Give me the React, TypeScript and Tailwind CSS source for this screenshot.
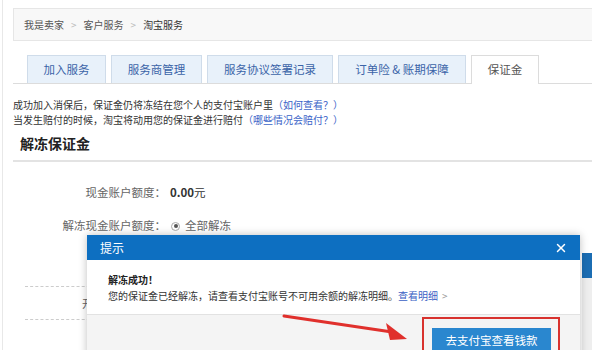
import { X } from "lucide-react";

const tabs = [
  { label: "加入服务", w: "w-[79px]" },
  { label: "服务商管理", w: "w-[91px]" },
  { label: "服务协议签署记录", w: "w-[126px]" },
  { label: "订单险 & 账期保障", w: "w-[128px]" },
];

export default function App() {
  return (
    <div className="relative h-[350px] w-[592px] overflow-hidden bg-white pl-[2px] font-['Noto_Sans_CJK_SC',sans-serif]">
      <div className="h-full border-l border-[#e8e8e8] pl-[10px] pt-[8px]">
        {/* breadcrumb */}
        <div className="mr-[-20px] flex h-[33px] items-center gap-[7px] border border-[#e6e6e6] bg-[#f8f8f8] pl-[10px] text-[10px] text-[#555]">
          <span>我是卖家</span>
          <span className="text-[#bbb]">&gt;</span>
          <span>客户服务</span>
          <span className="text-[#bbb]">&gt;</span>
          <span className="text-[#333]">淘宝服务</span>
        </div>

        {/* tabs */}
        <div className="mt-[14px] mr-[-20px] flex h-[29px] items-end gap-[5px] border-b border-[#dcdcdc] pl-[14px]">
          {tabs.map((t) => (
            <div
              key={t.label}
              className={`${t.w} flex h-[28px] items-center justify-center border border-b-0 border-[#cfdcea] bg-[#e8f1fa] text-[11.5px] text-[#3b64a8]`}
            >
              {t.label}
            </div>
          ))}
          <div className="-mb-px flex h-[29px] w-[68px] items-center justify-center border border-b-0 border-[#dcdcdc] bg-white text-[11.5px] text-[#555]">
            保证金
          </div>
        </div>

        {/* notes */}
        <div className="mt-[13px] text-[10px] leading-[15px] text-[#333]">
          <p>
            成功加入消保后，保证金仍将冻结在您个人的支付宝账户里
            <span className="text-[#3b64c8]">（如何查看？）</span>
          </p>
          <p>
            当发生赔付的时候，淘宝将动用您的保证金进行赔付
            <span className="text-[#3b64c8]">（哪些情况会赔付？）</span>
          </p>
        </div>

        <h2 className="mt-[6px] pl-[7px] text-[14px] leading-[20px] font-bold text-[#222]">解冻保证金</h2>
        <div className="mt-[7px] mr-[-20px] h-[2px] bg-[#e3e3e3]" />

        {/* form */}
        <div className="mt-[21px] flex h-[20px] items-center text-[11.5px] text-[#666]">
          <span className="w-[153px] text-right">现金账户额度：</span>
          <span className="ml-[4px] font-bold text-[#333]">0.00<span className="font-normal">元</span></span>
        </div>
        <div className="mt-[13px] flex h-[20px] items-center text-[11.5px] text-[#666]">
          <span className="w-[153px] text-right">解冻现金账户额度：</span>
          <span className="ml-[5px] flex h-[9px] w-[9px] items-center justify-center rounded-full border border-[#aaa]">
            <span className="h-[4px] w-[4px] rounded-full bg-[#555]" />
          </span>
          <span className="ml-[5px]">全部解冻</span>
        </div>

        <div className="mt-[50px] ml-[12px] w-[70px] border-t border-dashed border-[#ccc]" />
        <div className="mt-[9px] flex h-[14px] items-center pl-[69px] text-[11px] text-[#666]">开</div>
        <div className="mt-[9px] ml-[12px] w-[70px] border-t border-dashed border-[#ccc]" />
      </div>

      {/* element peeking out behind the dialog */}
      <div className="absolute top-[253px] left-[582px] h-[25px] w-[12px] bg-[#1b6db3]" />
      <div className="absolute top-[278px] left-[582px] h-[80px] w-[12px] bg-[#eeeeee]" />

      {/* dialog */}
      <div className="absolute top-[235px] left-[87px] w-[493px] bg-white shadow-[0_0_8px_rgba(0,0,0,0.25)]">
        <div className="flex h-[25px] items-center justify-between bg-[#0d6fc1] pr-[12px] pl-[13px] text-[12px] text-white">
          <span>提示</span>
          <X size={14} strokeWidth={2.5} />
        </div>
        <div className="h-[55px] border-b border-[#e2e2e2] pt-[12px] pl-[21px] text-[10px] leading-[16px] text-[#333]">
          <p className="font-bold text-[#222]">解冻成功！</p>
          <p>
            您的保证金已经解冻，请查看支付宝账号不可用余额的解冻明细。
            <span className="text-[#3b5fc4]">查看明细</span>
            <span className="ml-[4px] text-[#999]">&gt;</span>
          </p>
        </div>
        <div className="flex h-[50px] justify-end bg-[#f4f4f4] pt-[13px] pr-[29px]">
          <div className="flex h-[26px] w-[119px] items-center justify-center bg-[#2a87cf] text-[11.5px] text-white">
            去支付宝查看钱款
          </div>
        </div>
      </div>

      {/* red highlight box */}
      <div className="absolute top-[317px] left-[422px] h-[40px] w-[138px] border-2 border-[#d8322e]" />

      {/* red arrow */}
      <svg className="absolute top-0 left-0" width="592" height="350" viewBox="0 0 592 350">
        <path d="M284 316 L392 332" stroke="#e0302c" strokeWidth="3" strokeLinecap="round" />
        <path d="M407 339 L386 323 L390 340 Z" fill="#e0302c" />
      </svg>
    </div>
  );
}
